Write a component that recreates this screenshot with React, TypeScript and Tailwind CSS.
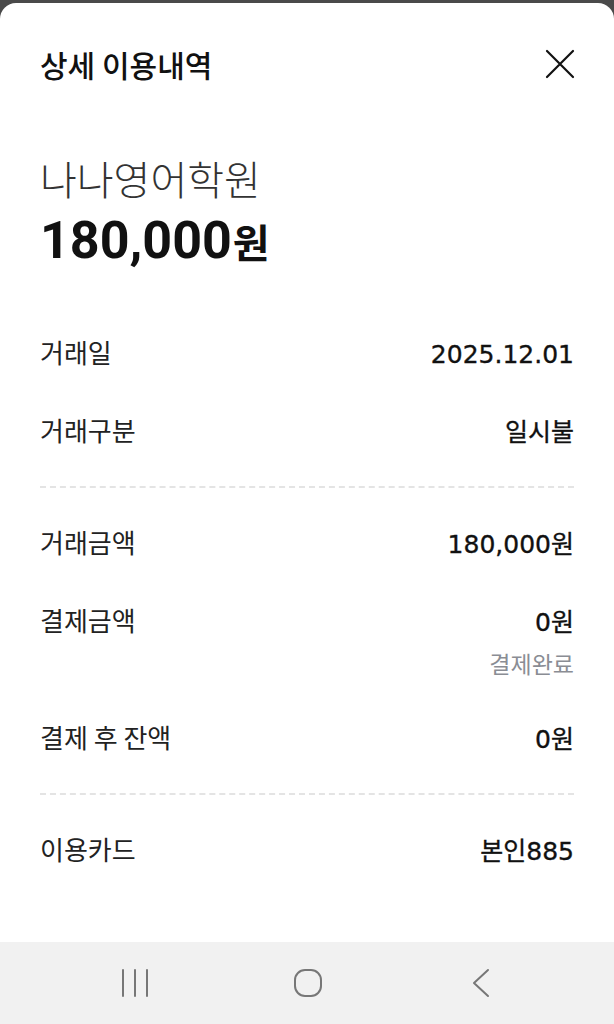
import React from "react";

const font = { fontFamily: '"Noto Sans CJK KR", "Noto Sans", sans-serif' };
const valueFont = { fontFamily: '"DejaVu Sans", "Noto Sans CJK KR", sans-serif' };
const amountFont = { fontFamily: 'Roboto, "Noto Sans CJK KR", sans-serif' };

interface RowProps {
  label: string;
  value: string;
  note?: string;
}

function Row({ label, value, note }: RowProps) {
  return (
    <div className="flex flex-col">
      <div className="flex items-center h-[78px]">
        <div className="flex flex-1 items-baseline justify-between">
          <span className="text-[26px] text-[#222]">{label}</span>
          <span
            className="text-[25px] font-normal text-[#111] [-webkit-text-stroke:0.35px_#111]"
            style={valueFont}
          >
            {value}
          </span>
        </div>
      </div>
      {note && (
        <div className="flex justify-end items-center h-[30px] -mt-[12px] mb-[21px]">
          <span className="text-[23px] text-[#8a8d94]">{note}</span>
        </div>
      )}
    </div>
  );
}

function Divider() {
  return <div className="border-t-2 border-dashed border-[#e4e4e4] my-[16px]" />;
}

export default function App() {
  return (
    <div className="w-[614px] h-[1024px] bg-[#4a4a4a] flex flex-col" style={font}>
      <div className="h-[3px] shrink-0" />
      <div className="flex-1 bg-white rounded-t-[16px] flex flex-col px-[40px]">
        <div className="flex items-center justify-between h-[122px]">
          <h1 className="text-[30px] font-medium text-[#111]">상세 이용내역</h1>
          <svg width="30" height="30" viewBox="0 0 30 30" className="mr-[-1px]">
            <path d="M2 2 L28 28 M28 2 L2 28" stroke="#111" strokeWidth="2.2" strokeLinecap="round" />
          </svg>
        </div>

        <div className="flex flex-col mt-[28px]">
          <span className="text-[40px] font-light text-[#333] leading-[50px]">나나영어학원</span>
          <div className="flex items-baseline mt-[10px] h-[56px] text-[#111]">
            <span className="text-[52px] font-bold leading-[56px]" style={amountFont}>
              180,000
            </span>
            <span className="text-[40px] font-bold leading-[56px] ml-[1px]">원</span>
          </div>
        </div>

        <div className="flex flex-col mt-[45px]">
          <Row label="거래일" value="2025.12.01" />
          <Row label="거래구분" value="일시불" />
          <Divider />
          <Row label="거래금액" value="180,000원" />
          <Row label="결제금액" value="0원" note="결제완료" />
          <Row label="결제 후 잔액" value="0원" />
          <Divider />
          <Row label="이용카드" value="본인885" />
        </div>
      </div>

      <div className="h-[82px] bg-[#f1f1f1] flex items-center pl-[120px] shrink-0">
        <svg width="30" height="30" viewBox="0 0 30 30">
          <path d="M3 2 V28 M15 2 V28 M27 2 V28" stroke="#777" strokeWidth="2" strokeLinecap="round" />
        </svg>
        <svg width="30" height="30" viewBox="0 0 30 30" className="ml-[143px]">
          <rect x="2" y="2" width="26" height="26" rx="10" fill="none" stroke="#777" strokeWidth="2" />
        </svg>
        <svg width="20" height="30" viewBox="0 0 20 30" className="ml-[148px]">
          <path d="M17 2 L3 15 L17 28" fill="none" stroke="#777" strokeWidth="2" strokeLinecap="round" strokeLinejoin="round" />
        </svg>
      </div>
    </div>
  );
}
